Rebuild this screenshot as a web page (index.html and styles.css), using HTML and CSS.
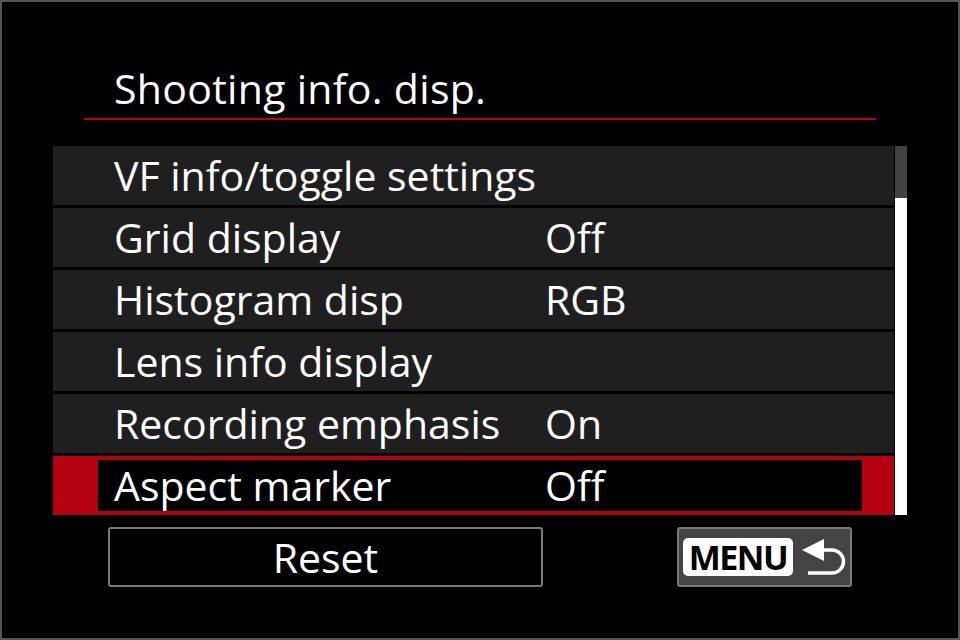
FILE: index.html
```html
<!DOCTYPE HTML>
<html>

<head>
    <meta charset="utf-8">
    <link rel="stylesheet" href="styles.css">
</head>

<body>
    <div class="screen">
        <div class="title">Shooting info. disp.</div>

        <div class="menu">
            <div class="list">
                <div class="row"><div class="row-in"><span>VF info/toggle settings</span><span></span></div></div>
                <div class="row"><div class="row-in"><span>Grid display</span><span>Off</span></div></div>
                <div class="row"><div class="row-in"><span>Histogram disp</span><span>RGB</span></div></div>
                <div class="row"><div class="row-in"><span>Lens info display</span><span></span></div></div>
                <div class="row"><div class="row-in"><span>Recording emphasis</span><span>On</span></div></div>
                <div class="row sel"><div class="row-in"><span>Aspect marker</span><span>Off</span></div></div>
            </div>
            <div class="scroll">
                <div class="thumb"></div>
            </div>
        </div>

        <div class="buttons">
            <div class="btn reset">Reset</div>
            <div class="btn back">
                <span class="menu-key">MENU</span>
                <svg class="ret" width="44" height="38" viewBox="0 0 44 38">
                    <path d="M0 12 L22 1 L22 23 Z" fill="#fff" />
                    <path d="M18 12 H30 A11.5 11.5 0 0 1 30 35 H6" fill="none" stroke="#fff" stroke-width="3.5" />
                </svg>
            </div>
        </div>
    </div>
</body>

</html>
```

FILE: styles.css
```css
body {
    margin: 0;
    background: #000;
}

.screen {
    width: 960px;
    height: 640px;
    box-sizing: border-box;
    border: 2px solid #555;
    background: #000;
    color: #fff;
    font-family: "Open Sans", "Noto Sans", sans-serif;
    font-size: 41px;
    padding-top: 62px;
}

.title {
    margin-left: 82px;
    width: 792px;
    padding-left: 30px;
    box-sizing: border-box;
    line-height: 48px;
    padding-bottom: 6px;
    border-bottom: 2px solid #c0000f;
    letter-spacing: 0.3px;
}

.menu {
    display: flex;
    margin-top: 26px;
    margin-left: 51px;
}

.list {
    width: 841px;
    display: flex;
    flex-direction: column;
    gap: 3px;
}

.row {
    background: #1f1f1f;
    padding: 4px 32px 4px 45px;
}

.row-in {
    height: 51px;
    padding-left: 16px;
    display: grid;
    grid-template-columns: 431px 1fr;
    align-items: center;
    line-height: 51px;
}

.row.sel {
    background: #b4000f;
}

.row.sel .row-in {
    background: #000;
}

.scroll {
    width: 12px;
    margin-left: 1px;
    background: #424242;
    display: flex;
    flex-direction: column;
    justify-content: flex-end;
}

.thumb {
    height: 317px;
    background: #fff;
}

.buttons {
    display: flex;
    margin-top: 12px;
    margin-left: 106px;
}

.btn {
    height: 60px;
    box-sizing: border-box;
    border: 2px solid #7a7a7a;
    border-radius: 3px;
    display: flex;
    align-items: center;
    justify-content: center;
}

.reset {
    width: 435px;
    background: #000;
    line-height: 56px;
}

.back {
    width: 175px;
    margin-left: 134px;
    background: #444;
    justify-content: flex-start;
    padding-left: 4px;
}

.menu-key {
    width: 110px;
    height: 38px;
    background: #fff;
    color: #000;
    border-radius: 5px;
    font-weight: 700;
    font-size: 34px;
    line-height: 38px;
    text-align: center;
    letter-spacing: -1.5px;
}

.ret {
    margin-left: 9px;
}
```
